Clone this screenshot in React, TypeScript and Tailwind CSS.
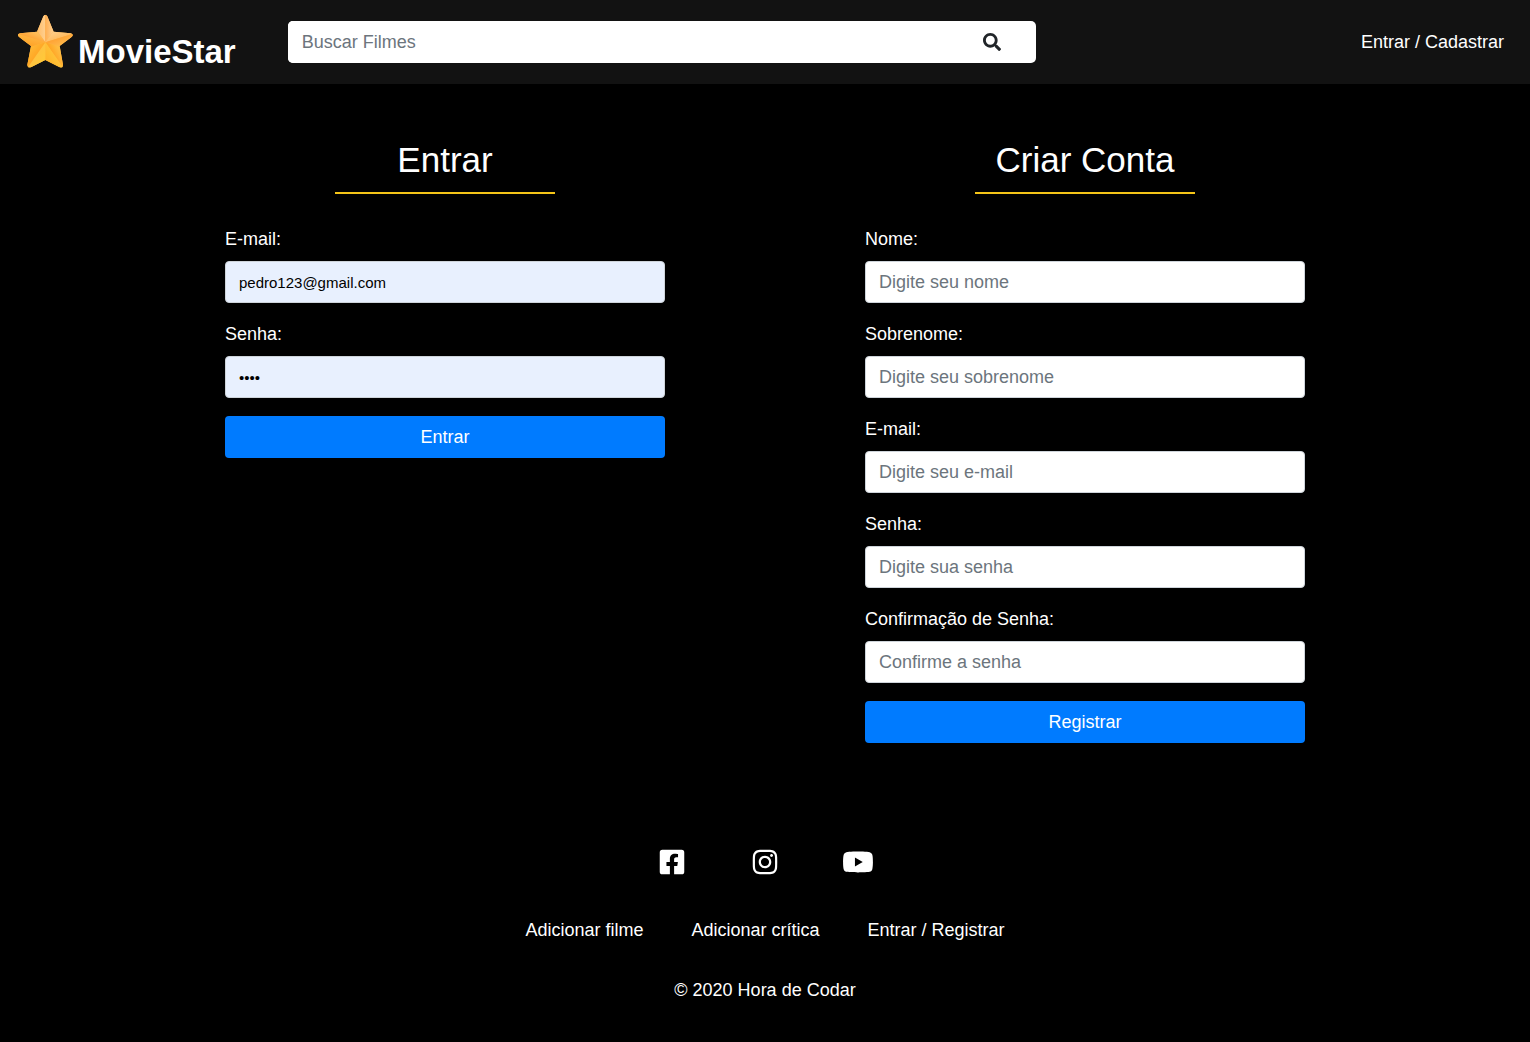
import React from "react";
import { FaSearch, FaFacebookSquare, FaInstagram, FaYoutube } from "react-icons/fa";

function StarLogo() {
  return (
    <svg viewBox="22 19 168 162" className="h-[54px] w-14 shrink-0 self-start" aria-hidden="true">
      <defs>
        <linearGradient id="topLeft" x1="84" y1="60" x2="110" y2="60" gradientUnits="userSpaceOnUse">
          <stop offset="0" stopColor="#ffbe6c" />
          <stop offset="1" stopColor="#ffd193" />
        </linearGradient>
        <linearGradient id="topRight" x1="107" y1="60" x2="130" y2="60" gradientUnits="userSpaceOnUse">
          <stop offset="0" stopColor="#ffae52" />
          <stop offset="1" stopColor="#ffcf8e" />
        </linearGradient>
        <linearGradient id="rightUp" x1="140" y1="72" x2="150" y2="98" gradientUnits="userSpaceOnUse">
          <stop offset="0" stopColor="#ffcb84" />
          <stop offset="1" stopColor="#ffb958" />
        </linearGradient>
        <linearGradient id="rightDown" x1="142" y1="90" x2="152" y2="114" gradientUnits="userSpaceOnUse">
          <stop offset="0" stopColor="#ffa234" />
          <stop offset="1" stopColor="#ffb849" />
        </linearGradient>
        <linearGradient id="leftUp" x1="72" y1="74" x2="62" y2="98" gradientUnits="userSpaceOnUse">
          <stop offset="0" stopColor="#ffbc58" />
          <stop offset="1" stopColor="#ff9d2c" />
        </linearGradient>
        <linearGradient id="leftDown" x1="66" y1="86" x2="60" y2="116" gradientUnits="userSpaceOnUse">
          <stop offset="0" stopColor="#ffb541" />
          <stop offset="1" stopColor="#ffa327" />
        </linearGradient>
        <linearGradient id="footLeft" x1="60" y1="125" x2="85" y2="145" gradientUnits="userSpaceOnUse">
          <stop offset="0" stopColor="#ffb734" />
          <stop offset="1" stopColor="#ffa422" />
        </linearGradient>
        <linearGradient id="footLeftIn" x1="78" y1="135" x2="105" y2="156" gradientUnits="userSpaceOnUse">
          <stop offset="0" stopColor="#ffc242" />
          <stop offset="1" stopColor="#ffc938" />
        </linearGradient>
        <linearGradient id="footRightIn" x1="107" y1="156" x2="136" y2="138" gradientUnits="userSpaceOnUse">
          <stop offset="0" stopColor="#ffb42a" />
          <stop offset="1" stopColor="#ffc338" />
        </linearGradient>
        <linearGradient id="footRight" x1="132" y1="142" x2="152" y2="132" gradientUnits="userSpaceOnUse">
          <stop offset="0" stopColor="#ffa726" />
          <stop offset="1" stopColor="#ffbd42" />
        </linearGradient>
        <clipPath id="starShape">
          <path d="M101 26Q107 17 113 26L132 72L183 77Q193 80 187 87L150 115L160 171Q160 182 150 179L107 157L64 179Q54 182 53 171L64 115L27 87Q21 80 31 77L82 72Z" />
        </clipPath>
      </defs>
      <g clipPath="url(#starShape)">
        <rect x="20" y="15" width="175" height="170" fill="#ffb443" />
        <path d="M107 104L80 66L107 10Z" fill="url(#topLeft)" />
        <path d="M107 104V10L134 66Z" fill="url(#topRight)" />
        <path d="M107 104L134 66L200 70V75Z" fill="url(#rightUp)" />
        <path d="M107 104L200 75L154 118Z" fill="url(#rightDown)" />
        <path d="M107 104L154 118L166 188Z" fill="url(#footRight)" />
        <path d="M107 104L166 188L107 160Z" fill="url(#footRightIn)" />
        <path d="M107 104V160L48 188Z" fill="url(#footLeftIn)" />
        <path d="M107 104L48 188L60 118Z" fill="url(#footLeft)" />
        <path d="M107 104L60 118L14 75Z" fill="url(#leftDown)" />
        <path d="M107 104L14 75V70L80 66Z" fill="url(#leftUp)" />
      </g>
    </svg>
  );
}

type FieldProps = {
  id: string;
  label: string;
  type?: string;
  placeholder?: string;
  defaultValue?: string;
};

function Field({ id, label, type = "text", placeholder, defaultValue }: FieldProps) {
  const look = defaultValue
    ? "bg-[#e8f0fe] text-[15px] text-black"
    : "bg-white text-lg text-[#495057]";
  return (
    <div className="mb-[18px]">
      <label htmlFor={id} className="mb-2 block leading-[27px]">
        {label}
      </label>
      <input
        id={id}
        type={type}
        placeholder={placeholder}
        defaultValue={defaultValue}
        className={`block h-[42px] w-full rounded border border-[#ced4da] px-[13px] placeholder:text-[#6c757d] placeholder:opacity-100 ${look}`}
      />
    </div>
  );
}

function AuthForm({ title, action, children }: { title: string; action: string; children: React.ReactNode }) {
  return (
    <section className="flex-1 px-[100px]">
      <h2 className="mx-auto mb-8 w-1/2 border-b-2 border-[#f5c518] pb-[11px] text-center text-[35px] leading-[42px] whitespace-nowrap">
        {title}
      </h2>
      <form onSubmit={(e) => e.preventDefault()}>
        {children}
        <button type="submit" className="h-[42px] w-full rounded bg-[#007bff] text-center text-white">
          {action}
        </button>
      </form>
    </section>
  );
}

export default function App() {
  return (
    <div className="min-h-screen bg-black font-['Liberation_Sans',Arial,sans-serif] text-lg leading-[27px] text-white">
      <header className="flex h-[84px] items-center bg-[#121212] pr-[26px] pl-[17px]">
        <a href="#" className="flex h-14 items-end gap-[5px]">
          <StarLogo />
          <span className="text-[33px] leading-9 font-bold">MovieStar</span>
        </a>
        <form role="search" className="ml-13 flex h-[42px] w-[50.3%] rounded-[5px] bg-white" onSubmit={(e) => e.preventDefault()}>
          <input
            type="search"
            aria-label="Buscar Filmes"
            placeholder="Buscar Filmes"
            className="min-w-0 flex-1 rounded-[5px] bg-white px-[14px] text-[#495057] placeholder:text-[#6c757d] placeholder:opacity-100"
          />
          <button type="submit" aria-label="Buscar" className="flex w-[87px] items-center justify-center text-[#212529]">
            <FaSearch size={18} />
          </button>
        </form>
        <a href="#" className="ml-auto">Entrar / Cadastrar</a>
      </header>

      <main className="mx-auto flex max-w-[1280px] pt-[55px]">
        <AuthForm title="Entrar" action="Entrar">
          <Field id="login-email" label="E-mail:" type="email" defaultValue="pedro123@gmail.com" />
          <Field id="login-password" label="Senha:" type="password" defaultValue="1234" />
        </AuthForm>
        <AuthForm title="Criar Conta" action="Registrar">
          <Field id="name" label="Nome:" placeholder="Digite seu nome" />
          <Field id="lastname" label="Sobrenome:" placeholder="Digite seu sobrenome" />
          <Field id="email" label="E-mail:" type="email" placeholder="Digite seu e-mail" />
          <Field id="password" label="Senha:" type="password" placeholder="Digite sua senha" />
          <Field id="confirm" label="Confirmação de Senha:" type="password" placeholder="Confirme a senha" />
        </AuthForm>
      </main>

      <footer className="flex flex-col items-center pt-[105px] pb-9">
        <ul className="flex gap-[61px]">
          <li><a href="#" aria-label="Facebook" className="flex w-8 justify-center"><FaFacebookSquare className="h-7 w-7" /></a></li>
          <li><a href="#" aria-label="Instagram" className="flex w-8 justify-center"><FaInstagram className="h-7 w-7" /></a></li>
          <li><a href="#" aria-label="YouTube" className="flex w-8 justify-center"><FaYoutube className="h-7 w-8" /></a></li>
        </ul>
        <ul className="mt-[41px] flex gap-12">
          <li><a href="#">Adicionar filme</a></li>
          <li><a href="#">Adicionar crítica</a></li>
          <li><a href="#">Entrar / Registrar</a></li>
        </ul>
        <p className="mt-[33px]">© 2020 Hora de Codar</p>
      </footer>
    </div>
  );
}
